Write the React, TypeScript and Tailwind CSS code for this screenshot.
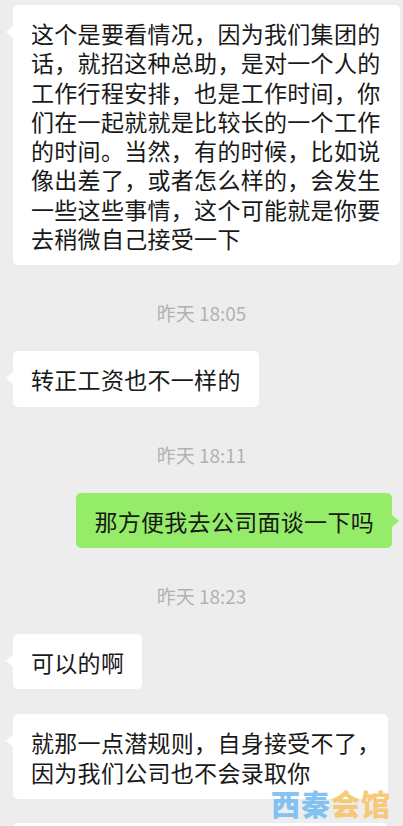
const FONT = "font-['PingFang_SC','Noto_Sans_CJK_SC',sans-serif]";

function Time({ text }: { text: string }) {
  return (
    <div className="mt-[38px] mb-[28px] h-[20px] flex items-center justify-center text-[19px] leading-[20px] text-[#b2b2b2]">
      {text}
    </div>
  );
}

function LeftBubble({ lines, width }: { lines: string[]; width?: string }) {
  return (
    <div className={`relative ml-[13px] self-start rounded-[5px] bg-white pl-[18px] pr-[18px] pt-[14px] pb-[12px] ${width ?? ""}`}>
      <span className="absolute left-[-7px] top-[21px] h-0 w-0 border-y-[6px] border-r-[7px] border-y-transparent border-r-white" />
      {lines.map((l, i) => (
        <div key={i} className="whitespace-nowrap text-[23px] leading-[29.3px] tracking-[0.3px] text-[#191919]">
          {l}
        </div>
      ))}
    </div>
  );
}

export default function App() {
  return (
    <div className={`relative h-[826px] w-[403px] overflow-hidden bg-[#ededed] ${FONT}`}>
      <div className="flex flex-col pt-[5px]">
        <LeftBubble
          width="w-[387px]"
          lines={[
            "这个是要看情况，因为我们集团的",
            "话，就招这种总助，是对一个人的",
            "工作行程安排，也是工作时间，你",
            "们在一起就就是比较长的一个工作",
            "的时间。当然，有的时候，比如说",
            "像出差了，或者怎么样的，会发生",
            "一些这些事情，这个可能就是你要",
            "去稍微自己接受一下",
          ]}
        />

        <Time text="昨天 18:05" />
        <LeftBubble lines={["转正工资也不一样的"]} />

        <Time text="昨天 18:11" />
        <div className="relative mr-[11px] self-end rounded-[5px] bg-[#95ec69] px-[18px] pt-[14px] pb-[12px]">
          <span className="absolute right-[-7px] top-[22px] h-0 w-0 border-y-[6px] border-l-[7px] border-y-transparent border-l-[#95ec69]" />
          <div className="whitespace-nowrap text-[23px] leading-[29.3px] tracking-[0.3px] text-[#191919]">
            那方便我去公司面谈一下吗
          </div>
        </div>

        <Time text="昨天 18:23" />
        <LeftBubble lines={["可以的啊"]} />

        <div className="h-[25px]" />
        <LeftBubble
          width="w-[375px]"
          lines={["就那一点潜规则，自身接受不了，", "因为我们公司也不会录取你"]}
        />

        <div className="h-[24px]" />
        <LeftBubble width="w-[375px]" lines={[" "]} />
      </div>

      {/* watermark */}
      <div className="absolute left-[271px] top-[787px] whitespace-nowrap text-[29px] font-black leading-[32px] tracking-[1px] opacity-90">
        <span className="text-[#78bdf2]">西秦</span>
        <span className="text-[#f6c66c]">会馆</span>
      </div>
    </div>
  );
}
